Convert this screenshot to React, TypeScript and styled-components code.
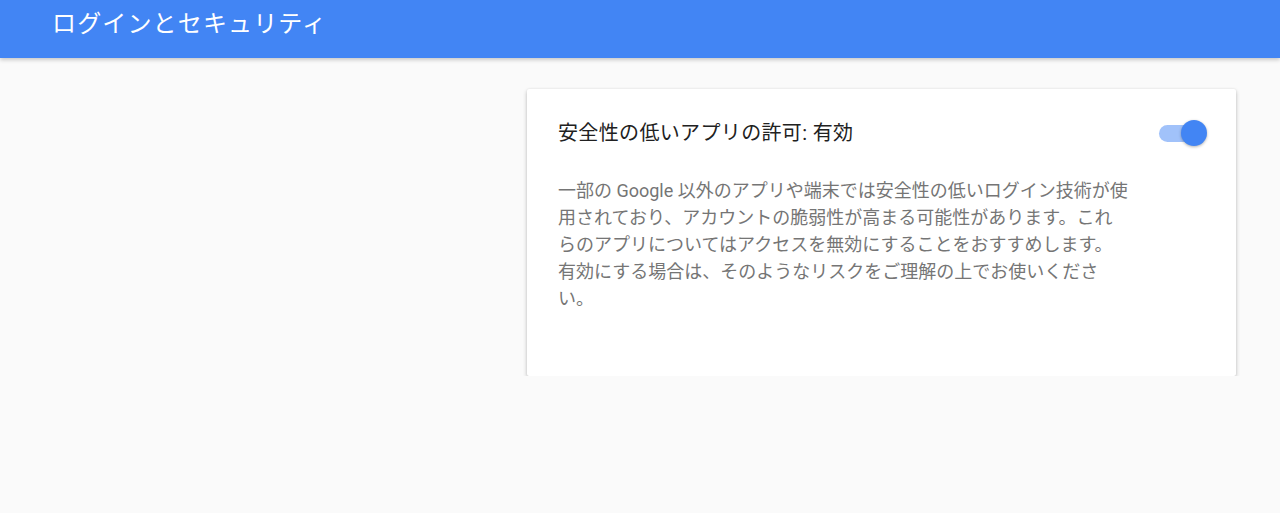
import React from 'react'
import styled, { createGlobalStyle } from 'styled-components'

const GlobalStyle = createGlobalStyle`
  html, body {
    margin: 0;
    padding: 0;
    background: #fafafa;
    font-family: Roboto, "Noto Sans CJK JP", sans-serif;
  }
`

const Header = styled.header`
  height: 58px;
  background: #4285f4;
  box-shadow: 0 2px 4px rgba(0, 0, 0, 0.2);
  display: flex;
  align-items: flex-start;
  padding: 8px 0 0 52px;
  box-sizing: border-box;
`

const Title = styled.h1`
  margin: 0;
  font-size: 24px;
  font-weight: 400;
  line-height: 32px;
  letter-spacing: 1.15px;
  color: #fff;
`

const Main = styled.main`
  display: flex;
  padding: 31px 0 0 527px;
`

const Card = styled.section`
  width: 709px;
  box-sizing: border-box;
  background: #fff;
  border-radius: 2px;
  box-shadow: 0 2px 4px rgba(0, 0, 0, 0.24), 0 0 2px rgba(0, 0, 0, 0.08);
  padding: 30px 29px 64px 31px;
`

const CardHead = styled.div`
  display: flex;
  align-items: center;
  justify-content: space-between;
`

const CardTitle = styled.h2`
  margin: 0;
  font-size: 20px;
  font-weight: 400;
  line-height: 28px;
  letter-spacing: 0.35px;
  color: #212121;
`

const Switch = styled.button<{ on: boolean }>`
  position: relative;
  width: 48px;
  height: 26px;
  padding: 0;
  border: 0;
  background: transparent;
  cursor: pointer;

  &::before {
    content: '';
    position: absolute;
    left: 0;
    top: 4.5px;
    width: 40px;
    height: 17px;
    border-radius: 9px;
    background: ${p => (p.on ? '#a1c2fa' : '#bdbdbd')};
  }

  &::after {
    content: '';
    position: absolute;
    top: 0;
    left: ${p => (p.on ? '22px' : '0')};
    width: 26px;
    height: 26px;
    border-radius: 50%;
    background: ${p => (p.on ? '#4285f4' : '#f1f1f1')};
    box-shadow: 0 1px 3px rgba(0, 0, 0, 0.3);
  }
`

const Description = styled.p`
  margin: 30px 0 0;
  max-width: 571px;
  font-size: 18px;
  line-height: 27px;
  color: #757575;
`

export default function App() {
  return (
    <>
      <GlobalStyle />
      <Header>
        <Title>ログインとセキュリティ</Title>
      </Header>
      <Main>
        <Card>
          <CardHead>
            <CardTitle>安全性の低いアプリの許可: 有効</CardTitle>
            <Switch on aria-label="安全性の低いアプリの許可" />
          </CardHead>
          <Description>
            一部の Google 以外のアプリや端末では安全性の低いログイン技術が使用されており、アカウントの脆弱性が高まる可能性があります。これらのアプリについてはアクセスを無効にすることをおすすめします。有効にする場合は、そのようなリスクをご理解の上でお使いください。
          </Description>
        </Card>
      </Main>
    </>
  )
}
